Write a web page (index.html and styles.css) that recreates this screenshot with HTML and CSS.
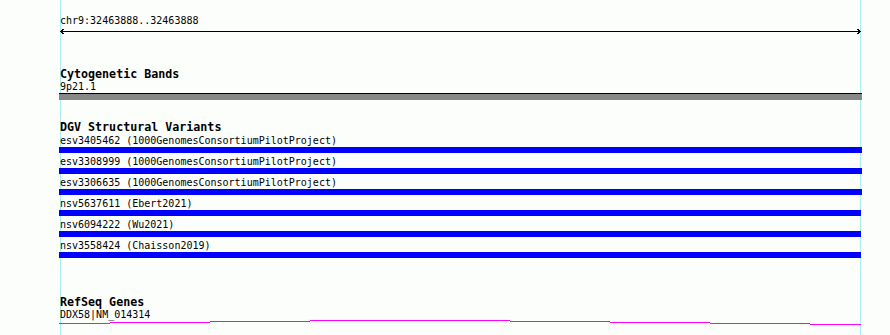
FILE: index.html
```html
<!DOCTYPE html>
<html lang="en">
<head>
    <meta charset="UTF-8">
    <title>chr9:32463888..32463888</title>
    <link rel="stylesheet" href="styles.css">
</head>
<body>

    <div class="browser">

        <!-- Ruler -->
        <div class="ruler">
            <div class="label">chr9:32463888..32463888</div>
            <svg class="ruler-arrow" width="803" height="7" viewBox="0 0 803 7">
                <line x1="1" y1="3.5" x2="802" y2="3.5" stroke="#000" stroke-width="1"/>
                <polyline points="5,1 1.5,3.5 5,6" fill="none" stroke="#000" stroke-width="1"/>
                <polyline points="798,1 801.5,3.5 798,6" fill="none" stroke="#000" stroke-width="1"/>
            </svg>
        </div>

        <!-- Cytogenetic bands -->
        <div class="track cyto">
            <div class="track-title">Cytogenetic Bands</div>
            <div class="label">9p21.1</div>
            <div class="band"></div>
        </div>

        <!-- DGV -->
        <div class="track dgv">
            <div class="track-title">DGV Structural Variants</div>
            <div class="sv">
                <div class="label">esv3405462 (1000GenomesConsortiumPilotProject)</div>
                <div class="sv-bar"></div>
            </div>
            <div class="sv">
                <div class="label">esv3308999 (1000GenomesConsortiumPilotProject)</div>
                <div class="sv-bar"></div>
            </div>
            <div class="sv">
                <div class="label">esv3306635 (1000GenomesConsortiumPilotProject)</div>
                <div class="sv-bar"></div>
            </div>
            <div class="sv">
                <div class="label">nsv5637611 (Ebert2021)</div>
                <div class="sv-bar short"></div>
            </div>
            <div class="sv">
                <div class="label">nsv6094222 (Wu2021)</div>
                <div class="sv-bar short"></div>
            </div>
            <div class="sv">
                <div class="label">nsv3558424 (Chaisson2019)</div>
                <div class="sv-bar short"></div>
            </div>
        </div>

        <!-- RefSeq -->
        <div class="track refseq">
            <div class="track-title">RefSeq Genes</div>
            <div class="label">DDX58|NM_014314</div>
            <svg class="gene" width="803" height="9" viewBox="0 0 803 9">
                <path d="M0 6.5H51M51 5.5H151M151 4.5H251M251 3.5H451M451 4.5H551M551 5.5H651M651 6.5H751M751 7.5H802"
                      fill="none" stroke="#f0f" stroke-width="1"/>
            </svg>
        </div>

    </div>

</body>
</html>
```

FILE: styles.css
```css
body {
    margin: 0;
    padding: 0;
    height: 335px;
    background-color: #fcfefc;
    /* the two view edges */
    background-image: linear-gradient(#afeeee, #afeeee), linear-gradient(#afeeee, #afeeee);
    background-size: 1px 100%, 1px 100%;
    background-position: 60px 0, 860px 0;
    background-repeat: no-repeat;
    font-family: "DejaVu Sans Mono", monospace;
    color: #000;
    overflow: hidden;
}

.browser {
    margin-left: 59px;
    width: 803px;
    padding-top: 15px;
}

.label {
    font-size: 10px;
    line-height: 12px;
    padding-left: 1px;
    white-space: pre;
}

.track-title {
    font-size: 11.67px;
    font-weight: bold;
    line-height: 13px;
    padding-left: 1px;
}

.ruler-arrow {
    display: block;
    margin-top: 1px;
    shape-rendering: crispEdges;
}

.cyto {
    margin-top: 33px;
}

.band {
    height: 6px;
    background-color: #888;
    border-top: 1px solid #000;
}

.dgv {
    margin-top: 23px;
}

.dgv .track-title {
    line-height: 9px;
}

.sv {
    padding-top: 2px;
}

.sv .label {
    line-height: 13px;
}

.sv-bar {
    height: 6px;
    background-color: #0000ff;
}

.sv-bar.short {
    margin-right: 1px;
}

.refseq {
    margin-top: 38px;
}

.gene {
    display: block;
    margin-top: -4px;
    shape-rendering: crispEdges;
}
```
